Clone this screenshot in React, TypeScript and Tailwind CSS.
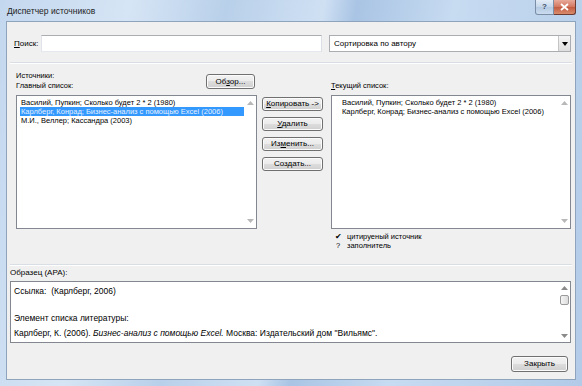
import React from "react";

const btnCls =
  "flex items-center justify-center rounded-[3px] border border-[#707070] bg-[linear-gradient(#f2f2f2_0%,#ebebeb_50%,#dddddd_50%,#cfcfcf_100%)] shadow-[inset_0_0_0_1px_#fbfbfb] text-[8px] leading-none text-black";

function Btn({ children, className = "" }: { children: React.ReactNode; className?: string }) {
  return <div className={`${btnCls} ${className}`}>{children}</div>;
}

function ScrollArrows() {
  return (
    <div className="flex w-[12px] shrink-0 flex-col items-center justify-between py-[5px]">
      <svg width="7" height="4" viewBox="0 0 7 4">
        <path d="M3.5 0 L7 4 L0 4 Z" fill="#b8b8b8" />
      </svg>
      <svg width="7" height="4" viewBox="0 0 7 4">
        <path d="M0 0 L7 0 L3.5 4 Z" fill="#b8b8b8" />
      </svg>
    </div>
  );
}

export default function App() {
  return (
    <div className="relative h-[386px] w-[582px] overflow-hidden bg-[linear-gradient(100deg,#c3d7ee_0%,#d6e5f5_20%,#b9d0ea_35%,#cfe0f3_50%,#a9c4e4_55%,#c7dbf1_70%,#b3cbe8_100%)] font-['Liberation_Sans',Arial,sans-serif] text-black">
      {/* title bar */}
      <div className="flex h-[21px] items-start justify-between">
        <div className="pl-[7px] pt-[6px] text-[8.5px] leading-[10px] text-[#1e1e1e]">Диспетчер источников</div>
        <div className="mr-[6px] flex">
          <div className="flex h-[15px] w-[19px] items-center justify-center rounded-bl-[3px] border border-t-0 border-[#7b8ea6] bg-[linear-gradient(#e4edf7,#c4d6ea_50%,#b4c9e1_50%,#cadcef)] text-[8px] font-bold leading-none text-[#3d4f66]">
            ?
          </div>
          <div className="flex h-[15px] w-[22px] items-center justify-center rounded-br-[3px] border border-l-0 border-t-0 border-[#6b3a30] bg-[linear-gradient(#e9a99a,#d2755f_50%,#c25a40_50%,#d98b6c)]">
            <svg width="9" height="8" viewBox="0 0 9 8">
              <path d="M1 1 L8 7 M8 1 L1 7" stroke="#ffffff" strokeWidth="1.8" />
            </svg>
          </div>
        </div>
      </div>

      {/* client panel */}
      <div className="ml-[6px] h-[359px] w-[570px] border border-[#8ea3bc] bg-[#f0f0f0]">
        {/* search row */}
        <div className="mt-[13px] flex h-[17px] items-center">
          <div className="w-[34px] pl-[7px] text-[8px] leading-none">
            <span className="underline">П</span>оиск:
          </div>
          <div className="h-[17px] w-[281px] border border-[#abadb3] border-b-[#e3e9ef] border-l-[#e2e3ea] border-r-[#dbdfe6] bg-white" />
          <div className="ml-[7px] flex h-[17px] w-[242px] items-center border border-[#abadb3] bg-white">
            <div className="flex-1 pl-[4px] text-[8px] leading-none">Сортировка по автору</div>
            <div className="flex h-[15px] w-[12px] items-center justify-center border-l border-[#c5c5c5] bg-[linear-gradient(#f5f5f5,#dedede)]">
              <svg width="6" height="4" viewBox="0 0 6 4">
                <path d="M0 0 L6 0 L3 4 Z" fill="#000" />
              </svg>
            </div>
          </div>
        </div>

        {/* separator */}
        <div className="mx-[3px] mt-[10px] border-t border-b border-t-[#d9dee4] border-b-white" />

        {/* lists */}
        <div className="mt-[5px] flex">
          {/* left column */}
          <div className="ml-[9px] w-[241px]">
            <div className="flex h-[26px] items-start justify-between">
              <div className="pt-[2px] text-[7.5px] leading-[10px]">
                <div>Источники:</div>
                <div>Главный список:</div>
              </div>
              <Btn className="mr-[2px] mt-[5px] h-[15px] w-[49px]">
                <span>
                  Об<span className="underline">з</span>ор...
                </span>
              </Btn>
            </div>
            <div className="flex h-[134px] border border-[#828790] bg-white">
              <div className="flex-1 whitespace-nowrap pl-[3px] pt-[2px] text-[7.5px] leading-[9px] text-black">
                <div className="pl-[1px]">Василий, Пупкин; Сколько будет 2 * 2 (1980)</div>
                <div className="bg-[#3399ff] pl-[1px] text-[#e6f0ff]">Карлберг, Конрад; Бизнес-анализ с помощью Excel (2006)</div>
                <div className="pl-[1px]">М.И., Веллер; Кассандра (2003)</div>
              </div>
              <ScrollArrows />
            </div>
          </div>

          {/* buttons */}
          <div className="ml-[5px] flex w-[61px] flex-col gap-[6px] pt-[28px]">
            <Btn className="h-[14px] border-[#3c7fb1] bg-[linear-gradient(#eaf6fd_0%,#d9f0fc_50%,#bee6fd_50%,#a7d9f5_100%)]">
              <span>
                <span className="underline">К</span>опировать -&gt;
              </span>
            </Btn>
            <Btn className="h-[14px]">
              <span>
                <span className="underline">У</span>далить
              </span>
            </Btn>
            <Btn className="h-[14px]">
              <span>
                Из<span className="underline">м</span>енить...
              </span>
            </Btn>
            <Btn className="h-[14px]">
              <span>
                Соз<span className="underline">д</span>ать...
              </span>
            </Btn>
          </div>

          {/* right column */}
          <div className="ml-[8px] w-[240px]">
            <div className="flex h-[26px] items-end pb-[4px] text-[7.5px] leading-[10px]">
              <span>
                <span className="underline">Т</span>екущий список:
              </span>
            </div>
            <div className="flex h-[134px] border border-[#828790] bg-white">
              <div className="flex-1 whitespace-nowrap pl-[10px] pt-[2px] text-[7.5px] leading-[9px] text-black">
                <div>Василий, Пупкин; Сколько будет 2 * 2 (1980)</div>
                <div>Карлберг, Конрад; Бизнес-анализ с помощью Excel (2006)</div>
              </div>
              <ScrollArrows />
            </div>
            <div className="mt-[3px] pl-[4px] text-[7.5px] leading-[9px]">
              <div className="flex">
                <span className="w-[12px]">✔</span>
                <span>цитируеный источник</span>
              </div>
              <div className="flex">
                <span className="w-[12px] pl-[1px]">?</span>
                <span>заполнитель</span>
              </div>
            </div>
          </div>
        </div>

        {/* separator */}
        <div className="mx-[3px] mt-[14px] border-t border-b border-t-[#d9dee4] border-b-white" />

        {/* preview */}
        <div className="ml-[3px] mt-[2px] text-[8px] leading-[10px]">Образец (APA):</div>
        <div className="ml-[3px] mt-[3px] flex h-[62px] w-[561px] border border-[#828790] bg-white">
          <div className="flex-1 pl-[3px] pt-[4px] text-[8.5px] leading-[11px]">
            <div>Ссылка:&nbsp; (Карлберг, 2006)</div>
            <div className="mt-[16px]">Элемент списка литературы:</div>
            <div className="mt-[4px]">
              Карлберг, К. (2006). <i>Бизнес-анализ с помощью Excel.</i> Москва: Издательский дом "Вильямс".
            </div>
          </div>
          <div className="flex w-[12px] flex-col items-center py-[4px]">
            <svg width="7" height="4" viewBox="0 0 7 4">
              <path d="M3.5 0 L7 4 L0 4 Z" fill="#8a8a8a" />
            </svg>
            <div className="mt-[5px] h-[10px] w-[9px] rounded-[2px] border border-[#9a9a9a] bg-[linear-gradient(90deg,#f4f4f4,#dcdcdc)]" />
            <div className="flex-1" />
            <svg width="7" height="4" viewBox="0 0 7 4">
              <path d="M0 0 L7 0 L3.5 4 Z" fill="#8a8a8a" />
            </svg>
          </div>
        </div>

        {/* close */}
        <div className="mt-[13px] flex justify-end pr-[7px]">
          <Btn className="h-[16px] w-[57px]">Закрыть</Btn>
        </div>
      </div>
    </div>
  );
}
